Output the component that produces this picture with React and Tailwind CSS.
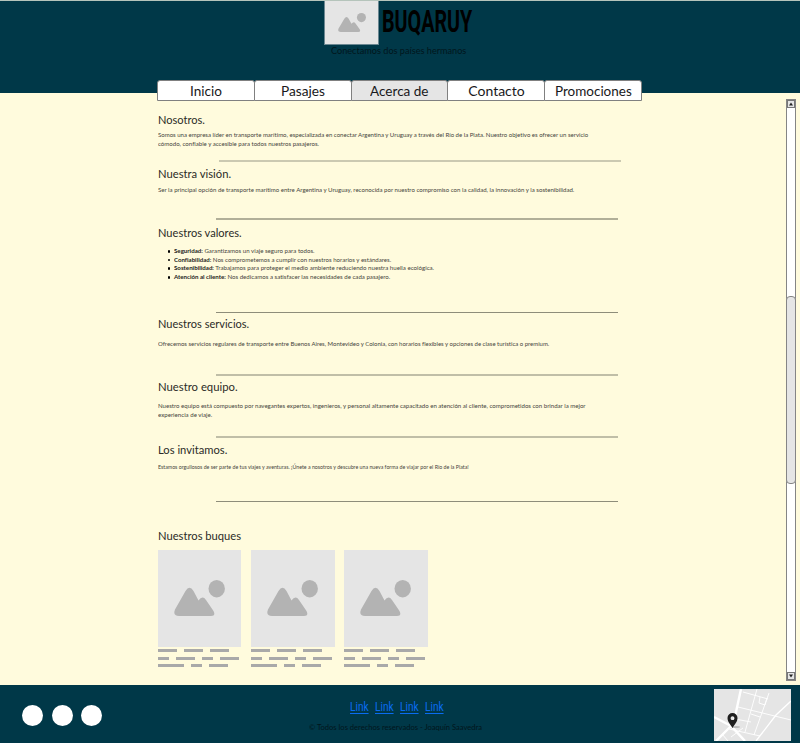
import React, { useLayoutEffect, useRef, useState } from "react";

/* Single line of text stretched horizontally to a given width. */
function Fit({ w, className = "", textClass = "", children }) {
  const ref = useRef(null);
  const [scale, setScale] = useState(1);
  useLayoutEffect(() => {
    const measure = () => {
      if (ref.current) setScale(w / ref.current.offsetWidth);
    };
    measure();
    document.fonts.ready.then(measure);
  }, [w]);
  return (
    <span className={`block whitespace-nowrap ${className}`} style={{ width: w }}>
      <span
        ref={ref}
        className={`inline-block origin-left align-top ${textClass}`}
        style={{ transform: `scaleX(${scale})` }}
      >
        {children}
      </span>
    </span>
  );
}

function Mountains({ className }) {
  return (
    <svg className={className} viewBox="0 0 51 36" preserveAspectRatio="none" fill="#b3b3b3">
      <path d="M1 29.500 L11.500 11 Q15.500 4.500 19.500 11 L24.500 20.500 Q28.500 15 32 20 L39.500 31 Q42 36 37 36 H5 Q-1.500 36 1 29.500Z" />
      <ellipse cx="42.700" cy="8.700" rx="8.200" ry="8.700" />
    </svg>
  );
}

const tabs = [
  ["Inicio", 32],
  ["Pasajes", 44],
  ["Acerca de", 59],
  ["Contacto", 56],
  ["Promociones", 77],
];

const values = [
  ["Seguridad:", "Garantizamos un viaje seguro para todos.", 141],
  ["Confiabilidad:", "Nos comprometemos a cumplir con nuestros horarios y estándares.", 217],
  ["Sostenibilidad:", "Trabajamos para proteger el medio ambiente reduciendo nuestra huella ecológica.", 260],
  ["Atención al cliente:", "Nos dedicamos a satisfacer las necesidades de cada pasajero.", 216],
];

const sections = [
  {
    title: ["Nosotros.", 47],
    box: "h-[59px] pt-[11px]",
    body: "mt-[2px]",
    rule: "ml-[61px] h-[2px] bg-[#cbc9b1]",
    lines: [
      ["Somos una empresa líder en transporte marítimo, especializada en conectar Argentina y Uruguay a través del Río de la Plata. Nuestro objetivo es ofrecer un servicio", 430],
      ["cómodo, confiable y accesible para todos nuestros pasajeros.", 161],
    ],
  },
  {
    title: ["Nuestra visión.", 73],
    box: "h-[56px] pt-1",
    body: "mt-[3px]",
    rule: "ml-[58px] h-[2px] bg-[#b1af98]",
    lines: [
      ["Ser la principal opción de transporte marítimo entre Argentina y Uruguay, reconocida por nuestro compromiso con la calidad, la innovación y la sostenibilidad.", 416],
    ],
  },
  {
    title: ["Nuestros valores.", 84],
    box: "h-[92px] pt-[5px]",
    rule: "ml-[58px] h-px bg-[#8e8d7a]",
    values: true,
  },
  {
    title: ["Nuestros servicios.", 91],
    box: "h-[61px] pt-[3px]",
    body: "mt-[7px]",
    rule: "ml-[58px] h-[2px] bg-[#c0bea7]",
    lines: [
      ["Ofrecemos servicios regulares de transporte entre Buenos Aires, Montevideo y Colonia, con horarios flexibles y opciones de clase turística o premium.", 391],
    ],
  },
  {
    title: ["Nuestro equipo.", 80],
    box: "h-[60px] pt-[3px]",
    body: "mt-[6px]",
    rule: "ml-[58px] h-[2px] bg-[#c0bea7]",
    lines: [
      ["Nuestro equipo está compuesto por navegantes expertos, ingenieros, y personal altamente capacitado en atención al cliente, comprometidos con brindar la mejor", 428],
      ["experiencia de viaje.", 54],
    ],
  },
  {
    title: ["Los invitamos.", 69],
    box: "h-[63px] pt-1",
    body: "mt-[4px] text-[5px]",
    rule: "ml-[58px] h-px bg-[#8e8d7a]",
    lines: [
      ["Estamos orgullosos de ser parte de tus viajes y aventuras. ¡Únete a nosotros y descubre una nueva forma de viajar por el Río de la Plata!", 311],
    ],
  },
];

function Heading({ text, w }) {
  return (
    <h2 className="text-[12px] leading-4 text-[#2b2b27]">
      <Fit w={w}>{text}</Fit>
    </h2>
  );
}

function Section({ s }) {
  return (
    <section>
      <div className={s.box}>
        <Heading text={s.title[0]} w={s.title[1]} />
        {s.values ? (
          <ul className="mt-[6px] ml-[9.500px] leading-[8.700px]">
            {values.map(([name, text, w]) => (
              <li key={name} className="flex h-[8.700px] items-center gap-1 text-[6px]">
                <i className="size-[2.500px] rounded-full bg-black" />
                <Fit w={w}>
                  <b className="text-[#1c1c1a]">{name}</b> {text}
                </Fit>
              </li>
            ))}
          </ul>
        ) : (
          <div className={`text-[6px] leading-[9px] ${s.body}`}>
            {s.lines.map(([text, w]) => (
              <Fit key={text} w={w}>{text}</Fit>
            ))}
          </div>
        )}
      </div>
      <div className={`w-[402px] ${s.rule}`} />
    </section>
  );
}

function Dashes() {
  const bar = "h-[3px] bg-[#a9a9a9]";
  return (
    <div className="mt-[2px] flex flex-col gap-[4.500px]">
      <div className="flex gap-[7px]">
        <i className={`${bar} w-[19px]`} /><i className={`${bar} w-[19px]`} /><i className={`${bar} w-[19px]`} />
      </div>
      <div className="flex gap-[7px]">
        <i className={`${bar} w-[11px]`} /><i className={`${bar} w-[19px]`} /><i className={`${bar} w-[11px]`} /><i className={`${bar} w-[19px]`} />
      </div>
      <div className="flex gap-[7px]">
        <i className={`${bar} w-[26px]`} /><i className={`${bar} w-[11px]`} /><i className={`${bar} w-[19px]`} />
      </div>
    </div>
  );
}

function MiniMap() {
  return (
    <svg className="h-[52px] w-[77px]" viewBox="0 0 77 52">
      <rect width="77" height="52" fill="#e5e5e5" />
      <g stroke="#fff" fill="none">
        <path d="M27 0 L19 37 M0 28 L17 37 L31 52 M17 37 L2 52" strokeWidth="2.400" />
        <path d="M43 0 L31 43 M55 4 L40 46 M24 18 L77 31 M29 3 L54 10 M21 30 L37 33 M15 40 L46 47 M37 25 L46 28 M46 8 L45 14 L51 16 L53 9 M17 48 L29 39 M8 45 L14 52" strokeWidth="0.900" />
        <path d="M77 12 L62 26 L42 52" strokeWidth="1.300" />
      </g>
      <ellipse cx="22" cy="38" rx="4" ry="1" fill="#bbb" />
      <path fillRule="evenodd" fill="#1e1e1e" d="M18.500 39 C16 35 13.500 32.500 13.500 29 A5 5 0 0 1 23.500 29 C23.500 32.500 21 35 18.500 39Z M18.500 27.300 a1.900 1.900 0 1 0 0.010 0Z" />
    </svg>
  );
}

function ScrollButton({ up }) {
  return (
    <div className="flex h-2 items-center justify-center border border-[#777] bg-[#e5e5e5]">
      <svg className="size-1" viewBox="0 0 4 4">
        <path d={up ? "M0 3.500 L2 0.500 L4 3.500Z" : "M0 0.500 L2 3.500 L4 0.500Z"} fill="#222" />
      </svg>
    </div>
  );
}

export default function App() {
  return (
    <div className="flex h-[743px] w-[800px] flex-col overflow-hidden bg-[#fffbdd] font-[Lato,sans-serif] text-[#45443c] [font-variant-ligatures:none]">
      <header className="h-[93px] shrink-0 border-t border-[#b5c4bb] bg-[#003848] text-[#00161c]">
        <div className="ml-[324px] flex h-[44px]">
          <div className="flex h-[44px] w-[55px] items-center justify-center border-x border-b border-[#6b8791] bg-[#e5e5e5]">
            <Mountains className="h-[19px] w-[28px]" />
          </div>
          <h1 className="ml-[3px] font-[Roboto,sans-serif] text-[32px] leading-[40px] font-bold text-black">
            <Fit w={90}>BUQARUY</Fit>
          </h1>
        </div>
        <p className="ml-[331px] text-[9px] leading-3">
          <Fit w={135}>Conectamos dos países hermanos</Fit>
        </p>
      </header>

      <nav className="relative -mt-[13px] ml-[157px] flex h-[21px] w-[485px] shrink-0">
        {tabs.map(([name, w]) => (
          <a
            key={name}
            className={`-mr-px flex flex-1 items-center justify-center rounded-t-[3px] border border-[#808080] text-[14px] leading-[19px] text-[#181820] last:mr-0 ${
              name === "Acerca de" ? "bg-[#e5e5e5]" : "bg-white"
            }`}
          >
            <Fit w={w} className="-mt-px">{name}</Fit>
          </a>
        ))}
      </nav>

      <div className="flex h-[584px] shrink-0 justify-between">
        <main className="ml-[158px] w-[500px]">
          {sections.map((s) => (
            <Section key={s.title[0]} s={s} />
          ))}
          <div className="pt-[26px]">
            <Heading text="Nuestros buques" w={83} />
            <div className="mt-[6px] flex gap-[9.800px]">
              {[0, 1, 2].map((n) => (
                <div key={n} className="w-[83.400px]">
                  <div className="h-[97px] bg-[#e5e5e5] pt-[30px] pl-4">
                    <Mountains className="h-[36px] w-[51px]" />
                  </div>
                  <Dashes />
                </div>
              ))}
            </div>
          </div>
        </main>
        <div className="-mt-[2px] mr-1 flex h-[582px] w-[10px] flex-col border border-[#858585] bg-white">
          <ScrollButton up />
          <div className="-mx-px mt-[188px] h-[188px] rounded-[4px] border border-[#858585] bg-[#e5e5e5]" />
          <div className="flex-1" />
          <ScrollButton />
        </div>
      </div>

      <footer className="flex h-[58px] shrink-0 bg-[#003848]">
        <div className="ml-[22px] flex w-[80px] items-center justify-between pt-[3px]">
          <i className="size-[21px] rounded-full bg-white" />
          <i className="size-[21px] rounded-full bg-white" />
          <i className="size-[21px] rounded-full bg-white" />
        </div>
        <div className="ml-[207px] w-[173px] pt-[15px]">
          <div className="ml-[41px] flex gap-[6.500px] font-[Roboto,sans-serif] text-[12px] leading-[15px] text-[#0a6cf0]">
            {[0, 1, 2, 3].map((n) => (
              <a key={n}>
                <Fit w={18.5} textClass="underline underline-offset-2">Link</Fit>
              </a>
            ))}
          </div>
          <p className="mt-[6px] text-[8px] leading-3 text-[#00161c]">
            <Fit w={173}>© Todos los derechos reservados - Joaquín Saavedra</Fit>
          </p>
        </div>
        <div className="mt-1 ml-[232px]">
          <MiniMap />
        </div>
      </footer>
    </div>
  );
}
